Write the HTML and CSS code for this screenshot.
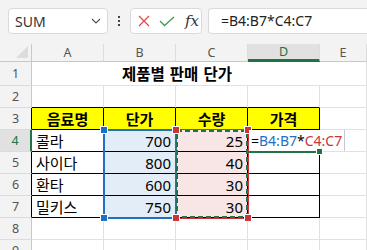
FILE: index.html
```html
<!DOCTYPE html>
<html lang="ko">
<head>
    <meta charset="UTF-8">
    <title>제품별 판매 단가</title>
    <link rel="stylesheet" href="styles.css">
</head>
<body>
    <div class="toolbar">
        <div class="name-box">
            <span>SUM</span>
            <svg class="chevron" width="10" height="6" viewBox="0 0 10 6"><path d="M1 1 L5 5 L9 1" fill="none" stroke="#555" stroke-width="1.2"/></svg>
        </div>
        <div class="dots"><i></i><i></i><i></i></div>
        <div class="fx-buttons">
            <svg width="12" height="12" viewBox="0 0 12 12"><path d="M1 1 L11 11 M11 1 L1 11" stroke="#e2474d" stroke-width="1.3"/></svg>
            <svg width="16" height="11" viewBox="0 0 16 11"><path d="M1 5 L5.5 9.5 L15 1" fill="none" stroke="#3aa14b" stroke-width="1.3"/></svg>
            <span class="fx">fx</span>
        </div>
        <div class="formula">=B4:B7*C4:C7</div>
    </div>

    <div class="sheet">
        <div class="corner"></div>
        <div class="col-head">A</div>
        <div class="col-head">B</div>
        <div class="col-head">C</div>
        <div class="col-head active">D</div>
        <div class="col-head">E</div>

        <div class="row-head">1</div>
        <div class="cell title">제품별 판매 단가</div>
        <div class="cell"></div>

        <div class="row-head">2</div>
        <div class="cell above"></div>
        <div class="cell above"></div>
        <div class="cell above"></div>
        <div class="cell above"></div>
        <div class="cell"></div>

        <div class="row-head edge">3</div>
        <div class="cell box head">음료명</div>
        <div class="cell box head">단가</div>
        <div class="cell box head">수량</div>
        <div class="cell box head">가격</div>
        <div class="cell"></div>

        <div class="row-head current">4</div>
        <div class="cell box">콜라</div>
        <div class="cell box num blue">700</div>
        <div class="cell box num red">25</div>
        <div class="cell box"></div>
        <div class="cell"></div>

        <div class="row-head edge">5</div>
        <div class="cell box">사이다</div>
        <div class="cell box num blue">800</div>
        <div class="cell box num red">40</div>
        <div class="cell box"></div>
        <div class="cell"></div>

        <div class="row-head edge">6</div>
        <div class="cell box">환타</div>
        <div class="cell box num blue">600</div>
        <div class="cell box num red">30</div>
        <div class="cell box"></div>
        <div class="cell"></div>

        <div class="row-head edge">7</div>
        <div class="cell box">밀키스</div>
        <div class="cell box num blue">750</div>
        <div class="cell box num red">30</div>
        <div class="cell box"></div>
        <div class="cell"></div>

        <div class="row-head">8</div>
        <div class="cell"></div>
        <div class="cell"></div>
        <div class="cell"></div>
        <div class="cell"></div>
        <div class="cell"></div>

        <div class="row-head">9</div>
        <div class="cell"></div>
        <div class="cell"></div>
        <div class="cell"></div>
        <div class="cell"></div>
        <div class="cell"></div>

        <!-- formula range overlays -->
        <div class="range range-b"></div>
        <div class="range range-c"></div>
        <svg class="marquee" width="74" height="90" viewBox="0 0 74 90">
            <rect x="2" y="2" width="70" height="86" fill="none" stroke="#217346" stroke-width="2" stroke-dasharray="5 3"/>
        </svg>
        <span class="handle blue-h" style="left:101px; top:83px"></span>
        <span class="handle blue-h" style="left:101px; top:171px"></span>
        <span class="handle red-h" style="left:173px; top:83px"></span>
        <span class="handle red-h" style="left:245px; top:83px"></span>
        <span class="handle red-h" style="left:173px; top:171px"></span>
        <span class="handle red-h" style="left:245px; top:171px"></span>

        <div class="editor">=<span class="ref-b">B4:B7</span>*<span class="ref-c">C4:C7</span></div>
        <div class="active-bottom"></div>
        <span class="fill-handle"></span>
    </div>
</body>
</html>
```

FILE: styles.css
```css
body {
    margin: 0;
    background: #fff;
    font-family: "Noto Sans", "Noto Sans CJK KR", sans-serif;
    color: #000;
    overflow: hidden;
}

.toolbar {
    height: 44px;
    background: #f3f3f3;
    display: flex;
    align-items: flex-start;
    padding: 8px 0 0 8px;
    box-sizing: border-box;
}

.name-box {
    width: 100px;
    height: 26px;
    box-sizing: border-box;
    background: #fff;
    border: 1px solid #dadada;
    border-radius: 4px;
    display: flex;
    align-items: center;
    justify-content: space-between;
    padding: 0 6px 0 6px;
    font-size: 14px;
    color: #333;
}

.dots {
    width: 22px;
    height: 26px;
    display: flex;
    flex-direction: column;
    align-items: center;
    justify-content: center;
    gap: 2px;
}

.dots i {
    width: 2px;
    height: 2px;
    background: #444;
}

.fx-buttons {
    width: 72px;
    height: 26px;
    box-sizing: border-box;
    background: #fff;
    border: 1px solid #dadada;
    border-radius: 4px;
    display: flex;
    align-items: center;
    padding-left: 7px;
    gap: 9px;
}

.fx {
    font-family: "DejaVu Serif", "Liberation Serif", serif;
    font-style: italic;
    font-size: 15px;
    color: #333;
    margin-left: 1px;
}

.formula {
    flex: 1;
    margin-left: 6px;
    height: 26px;
    box-sizing: border-box;
    background: #fff;
    border: 1px solid #dadada;
    border-right: none;
    border-radius: 4px 0 0 4px;
    padding-left: 12px;
    font-size: 14px;
    line-height: 24px;
    color: #222;
}

.sheet {
    position: relative;
    display: grid;
    grid-template-columns: 32px 72px 72px 72px 72px 1fr;
    grid-template-rows: 18px 24px repeat(8, 22px);
}

.corner,
.col-head,
.row-head {
    background: #f3f3f3;
    color: #555;
    font-size: 12.5px;
    box-sizing: border-box;
    display: flex;
    align-items: center;
    justify-content: center;
}

.corner {
    border-right: 1px solid #c8c8c8;
    border-bottom: 1px solid #c8c8c8;
    position: relative;
}

.corner::after {
    content: "";
    position: absolute;
    right: 3px;
    bottom: 3px;
    border-left: 12px solid transparent;
    border-bottom: 12px solid #dcdcdc;
}

.col-head {
    border-right: 1px solid #dcdcdc;
    border-bottom: 1px solid #c8c8c8;
}

.col-head.active {
    background: #e1e1e1;
    color: #217346;
    border-bottom: 3px solid #217346;
}

.row-head {
    border-right: 1px solid #c8c8c8;
    border-bottom: 1px solid #dcdcdc;
}

.row-head.edge {
    border-right-color: #000;
}

.row-head.current {
    background: #e1e1e1;
    color: #217346;
    border-right: 2px solid #217346;
}

.cell {
    box-sizing: border-box;
    border-right: 1px solid #e1e1e1;
    border-bottom: 1px solid #e1e1e1;
    font-size: 15px;
    line-height: 20px;
    padding: 0 4px;
    white-space: nowrap;
    display: flex;
    align-items: center;
}

.title {
    grid-column: 2 / 6;
    justify-content: center;
    font-weight: bold;
    font-size: 15.5px;
    word-spacing: 1px;
    border-right: none;
    padding-right: 2px;
}

.above {
    border-bottom-color: #000;
}

.box {
    border-right-color: #000;
    border-bottom-color: #000;
}

.head {
    background: #ffff00;
    font-weight: bold;
    justify-content: center;
}

.num {
    justify-content: flex-end;
}

.blue {
    background: #e3edf8;
}

.red {
    background: #f8e6e6;
}

.range {
    position: absolute;
    top: 85px;
    height: 90px;
    width: 74px;
    box-sizing: border-box;
}

.range-b {
    left: 103px;
    border: 2px solid #1f6fc4;
}

.range-c {
    left: 175px;
    border: 1px solid #c8353a;
}

.marquee {
    position: absolute;
    left: 175px;
    top: 85px;
}

.handle {
    position: absolute;
    width: 6px;
    height: 6px;
    box-sizing: border-box;
    outline: 1px solid #fff;
}

.blue-h {
    background: #1f6fc4;
}

.red-h {
    background: #c8353a;
}

.editor {
    position: absolute;
    left: 249px;
    top: 86px;
    width: 96px;
    height: 21px;
    box-sizing: border-box;
    background: #fff;
    border-right: 1px solid #c8c8c8;
    padding-left: 2px;
    font-size: 14px;
    line-height: 21px;
    white-space: nowrap;
}

.ref-b {
    color: #1f6fc4;
}

.ref-c {
    color: #c8353a;
}

.active-bottom {
    position: absolute;
    left: 248px;
    top: 107px;
    width: 72px;
    height: 2px;
    background: #217346;
}

.fill-handle {
    position: absolute;
    left: 317px;
    top: 105px;
    width: 5px;
    height: 5px;
    background: #217346;
    outline: 1px solid #fff;
}
```
